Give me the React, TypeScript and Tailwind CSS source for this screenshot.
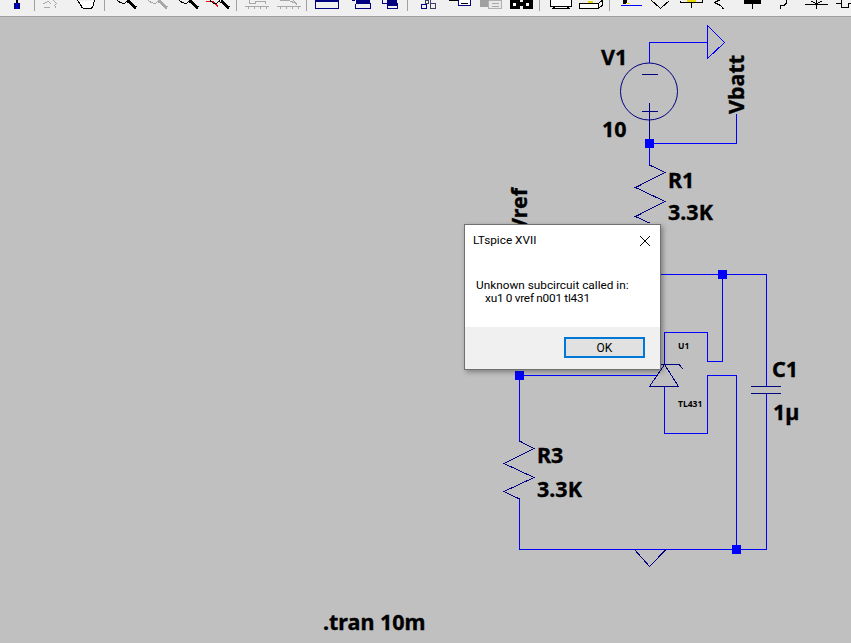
import React from "react";

const NAVY = "#000080";
const GRAY = "#a8a8a8";

// Toolbar icon: the top of the strip is cut off by the window edge, so only 10px show
function Tool({ w, className, children }: { w: number; className: string; children?: React.ReactNode }) {
  return (
    <svg width={w} height={10} viewBox={`0 0 ${w} 10`} shapeRendering="crispEdges" fill="none" className={`shrink-0 ${className}`}>
      {children}
    </svg>
  );
}

function Sep({ className }: { className: string }) {
  return <div className={`h-[11px] w-px shrink-0 bg-[#a0a0a0] ${className}`} />;
}

function Magnifier({ color = "#000000" }: { color?: string }) {
  return (
    <>
      <path d="M0.5 0.5 L3 2.5 L7 3.5 L10 1.5 L11 0" stroke={color} />
      <path d="M11 1 L19 8" stroke={color} strokeWidth="3" />
    </>
  );
}

function Toolbar() {
  return (
    <div className="flex h-[16px] shrink-0 items-start overflow-hidden bg-[#f0f0f0]">
      <Tool w={8} className="ml-[13px]">
        <path d="M3 0h2v3h-2z" fill="#000000" />
        <path d="M1 3h6v6h-6z" fill={NAVY} />
        <path d="M3 3h2v6h-2z" fill="#0000d0" />
      </Tool>
      <Sep className="ml-[13px]" />
      <Tool w={15} className="ml-[8px]">
        <path d="M0.5 3.5 L5.5 1.5 L8.5 4.5 M1 7.5 H7 M10.5 0.5 L13.5 3.5 L11.5 5.5 L13.5 8.5" stroke={GRAY} />
      </Tool>
      <Tool w={18} className="ml-[19px]">
        <path d="M0.5 0.5 L3.5 4.5 L5 7.5 L7 8.5 H14 L16 6.5 L17.5 0.5" fill="#ffffff" stroke="#000000" />
      </Tool>
      <Sep className="ml-[9px]" />
      <Tool w={20} className="ml-[12px]">
        <Magnifier />
      </Tool>
      <Tool w={20} className="ml-[11px]">
        <Magnifier color={GRAY} />
      </Tool>
      <Tool w={20} className="ml-[11px]">
        <Magnifier />
      </Tool>
      <Tool w={24} className="ml-[7px]">
        <path d="M0 1.5 H7 L12 6.5" stroke="#ff0000" strokeWidth="1.5" />
        <path d="M4 0.5 L7 3 L11 3 L14 0.5" stroke="#000000" />
        <path d="M15 1 L23 8" stroke="#000000" strokeWidth="3" />
      </Tool>
      <Sep className="ml-[6px]" />
      <Tool w={24} className="ml-[8px]">
        <path d="M4.5 0 V3.5 H10.5 V1.5 H20.5 V3.5 M0 6.5 H24 M3.5 6 V9 M9.5 6 V9 M15.5 6 V9 M21.5 6 V9" stroke={GRAY} />
      </Tool>
      <Tool w={24} className="ml-[8px]">
        <path d="M3 0.5 H12 L20 4 M16 0 L20 5 M0 6.5 H24 M3.5 6 V9 M9.5 6 V9 M15.5 6 V9 M21.5 6 V9" stroke={GRAY} />
      </Tool>
      <Sep className="ml-[5px]" />
      <Tool w={24} className="ml-[8px]">
        <path d="M0 0h24v2h-24z" fill={NAVY} />
        <path d="M0.5 2 V8.5 H23.5 V2" stroke={NAVY} />
      </Tool>
      <Tool w={20} className="ml-[12px]">
        <path d="M0.5 0.5 H4 M4.5 3.5 H19.5 V8.5 H4.5 V3.5" stroke={NAVY} />
        <path d="M5 0h14v3h-14z" fill={NAVY} />
      </Tool>
      <Tool w={16} className="ml-[11px]">
        <path d="M0.5 0 V3.5 H5 M5.5 3.5 H15.5 V8.5 H5.5 V3.5" stroke={NAVY} />
        <path d="M5 0h10v6h-10z" fill={NAVY} />
      </Tool>
      <Sep className="ml-[9px]" />
      <Tool w={15} className="ml-[13px]">
        <path d="M0.5 4.5 H5.5 V8.5 H0.5 Z" stroke={NAVY} />
        <path d="M9.5 0 V8.5 H14.5 V3.5 H9.5" stroke="#404060" />
        <path d="M4 0 H7 V3 H4 Z" stroke="#404060" />
      </Tool>
      <Tool w={22} className="ml-[13px]">
        <path d="M0 0.5 H10" stroke="#000000" />
        <path d="M9.5 0 V5.5 H21.5 V0" fill="#ffffff" stroke={NAVY} />
        <path d="M12 3.5 H19" stroke="#000000" />
      </Tool>
      <Tool w={22} className="ml-[9px]">
        <path d="M0 0h12v7h-12z" fill="#a0a0a0" />
        <path d="M8.5 1 V8.5 H21.5 V0 H8.5" fill="#e8e8e8" stroke="#b0b0b0" />
        <path d="M12 3.5 H19 M12 6.5 H19" stroke={GRAY} />
      </Tool>
      <Tool w={23} className="ml-[8px]">
        <path d="M0 0h10v9h-10z M13 0h10v9h-10z M10 2h3v4h-3z" fill="#000000" />
        <path d="M3 3h3v3h-3z M16 3h3v3h-3z" fill="#ffffff" />
      </Tool>
      <Sep className="ml-[6px]" />
      <Tool w={22} className="ml-[10px]">
        <path d="M1 0h20v6h-20z" fill="#c4c4c4" />
        <path d="M0.5 0 V6.5 H21.5 V0 M4.5 7 L3 8.5 H19 L17.5 7" stroke="#000000" fill="#ffffff" />
      </Tool>
      <Tool w={24} className="ml-[7px]">
        <path d="M0.5 3.5 H19.5 V8.5 H0.5 Z M19.5 8.5 L23.5 5 V1 M19.5 3.5 L23.5 0" stroke="#000000" fill="#ffffff" />
        <path d="M9 1h5v2h-5z" fill="#e8d800" />
      </Tool>
      <Sep className="ml-[6px]" />
      <Tool w={21} className="ml-[11px]">
        <path d="M0 5.5 H21" stroke="#0000ff" />
        <path d="M2 0h4v2l-2 2h-2z" fill="#000000" />
        <path d="M6 3 H9" stroke="#e8d800" />
      </Tool>
      <Tool w={19} className="ml-[9px]">
        <path d="M0.5 0.5 L9.5 8.5 L18.5 0.5" stroke="#000000" />
      </Tool>
      <Tool w={23} className="ml-[10px]">
        <path d="M0 0.5 V2.5 H22.5 V0" stroke="#000000" />
        <path d="M7 0h9v2h-9z" fill="#e8d800" />
        <path d="M11.5 3 V8" stroke="#000000" />
      </Tool>
      <Tool w={10} className="ml-[11px]">
        <path d="M5.5 0 L0.5 2.5 L6.5 5.5 L9.5 9" stroke="#000000" />
      </Tool>
      <Tool w={17} className="ml-[20px]">
        <path d="M0 0h17v4h-17z" fill="#000000" />
        <path d="M8 4h1v5h-1z" fill="#000000" />
      </Tool>
      <Tool w={9} className="ml-[18px]">
        <path d="M7.5 0 V3 L5 5.5 H2 L1 8.5" stroke="#000000" />
      </Tool>
      <Tool w={23} className="ml-[17px]">
        <path d="M0 4.5 H23 M11.5 0 V9 M6 1 L11.5 4 L17 1" stroke="#000000" />
      </Tool>
      <Tool w={15} className="ml-[8px]">
        <path d="M0 3.5 H5 M5.5 0 V7.5 H12.5 V3 M12 3.5 H15" stroke="#000000" />
      </Tool>
    </div>
  );
}

function Label({ x, y, small, rotate, children }: { x: number; y: number; small?: boolean; rotate?: boolean; children: React.ReactNode }) {
  return (
    <text
      x={x}
      y={y}
      transform={rotate ? `rotate(-90 ${x} ${y})` : undefined}
      fill="#000000"
      stroke="#000000"
      strokeWidth={small ? 0 : 0.35}
      shapeRendering="auto"
      className={`font-['Noto_Sans',sans-serif] font-bold ${small ? "text-[8.5px]" : "text-[21.5px]"}`}
    >
      {children}
    </text>
  );
}

function Node({ x, y }: { x: number; y: number }) {
  return <rect x={x - 4} y={y - 4} width={9} height={9} fill="#0000ff" />;
}

// The schematic itself, in window coordinates
function Schematic() {
  return (
    <svg width={851} height={626} viewBox="0 17 851 626" fill="none" shapeRendering="crispEdges" className="absolute inset-0">
      {/* wires */}
      <g stroke="#0000ff">
        <path d="M649.5 63 V42.5 H707.5" />
        <path d="M649.5 143.5 H736.5 V114" />
        <path d="M660 274.5 H766.5 V386" />
        <path d="M722.5 274.5 V361.5 H707.5 V332.5 H664.5 V364" />
        <path d="M664.5 387 V433.5 H707.5 V375.5 H736.5 V549" />
        <path d="M766.5 394 V549.5 H519.5 V499" />
        <path d="M519.5 375.5 V441" />
        <path d="M519.5 375.5 H657" />
        <path d="M649.5 145 V165" />
        <path d="M707.5 25.5 L724.5 42.5 L707.5 58.5 Z" />
      </g>
      {/* components */}
      <g stroke={NAVY}>
        <circle cx={649} cy={91.5} r={28.5} shapeRendering="auto" />
        <path d="M642 74.5 H658 M642 111.5 H658 M649.5 103 V143" />
        <path d="M649.5 165 L665 172.5 L635.5 187.5 L665 201.5 L635.5 216.5 L649.5 223" />
        <path d="M519.5 441 L534 448.5 L504 463.5 L534 477.5 L504 491.5 L519.5 499" />
        <path d="M664.5 364.5 L649.5 386.5 H678.5 Z" />
        <path d="M650 364.5 H679 L683 369" />
        <path d="M751 386.5 H781 M751 393.5 H781" />
        <path d="M634.5 549.5 L649.5 566.5 L666 549.5" />
      </g>
      <Node x={649} y={143} />
      <Node x={722} y={274} />
      <Node x={519} y={375} />
      <Node x={736} y={549} />
      <Label x={601} y={65}>V1</Label>
      <Label x={602} y={137}>10</Label>
      <Label x={744} y={114} rotate>Vbatt</Label>
      <Label x={668} y={188}>R1</Label>
      <Label x={668} y={220}>3.3K</Label>
      <Label x={527} y={232} rotate>Vref</Label>
      <Label x={772} y={377}>C1</Label>
      <Label x={773} y={420}>1µ</Label>
      <Label x={537} y={463}>R3</Label>
      <Label x={537} y={497}>3.3K</Label>
      <Label x={678} y={349} small>U1</Label>
      <Label x={678} y={407} small>TL431</Label>
      <Label x={323} y={630}>.tran 10m</Label>
    </svg>
  );
}

function ErrorDialog() {
  return (
    <div className="absolute left-[464px] top-[224px] flex h-[146px] w-[197px] flex-col border border-[#707070] bg-white font-['Roboto',sans-serif] text-[11.8px] text-black shadow-[2px_2px_5px_rgba(0,0,0,0.35)]">
      <div className="flex h-[31px] items-center justify-between pl-[8px] pr-[9px]">
        <span>LTspice XVII</span>
        <svg width={12} height={12} viewBox="0 0 12 12" stroke="#000000" fill="none">
          <path d="M1 1 L11 11 M11 1 L1 11" />
        </svg>
      </div>
      <div className="flex-1 pl-[11px] pt-[23px] leading-[13px]">
        <p>Unknown subcircuit called in:</p>
        <p className="pl-[9px] tracking-[-0.2px] [word-spacing:-0.3px]">xu1 0 vref n001 tl431</p>
      </div>
      <div className="flex h-[42px] items-start justify-end bg-[#f0f0f0] pr-[15px] pt-[10px]">
        <button className="h-[21px] w-[81px] border-2 border-[#0078d7] bg-[#e1e1e1] text-[12px] leading-none">OK</button>
      </div>
    </div>
  );
}

export default function App() {
  return (
    <div className="relative flex h-[643px] w-[851px] flex-col overflow-hidden bg-[#c0c0c0]">
      <Toolbar />
      <div className="h-px shrink-0 bg-[#a0a0a0]" />
      <div className="relative flex-1">
        <Schematic />
      </div>
      <ErrorDialog />
    </div>
  );
}
